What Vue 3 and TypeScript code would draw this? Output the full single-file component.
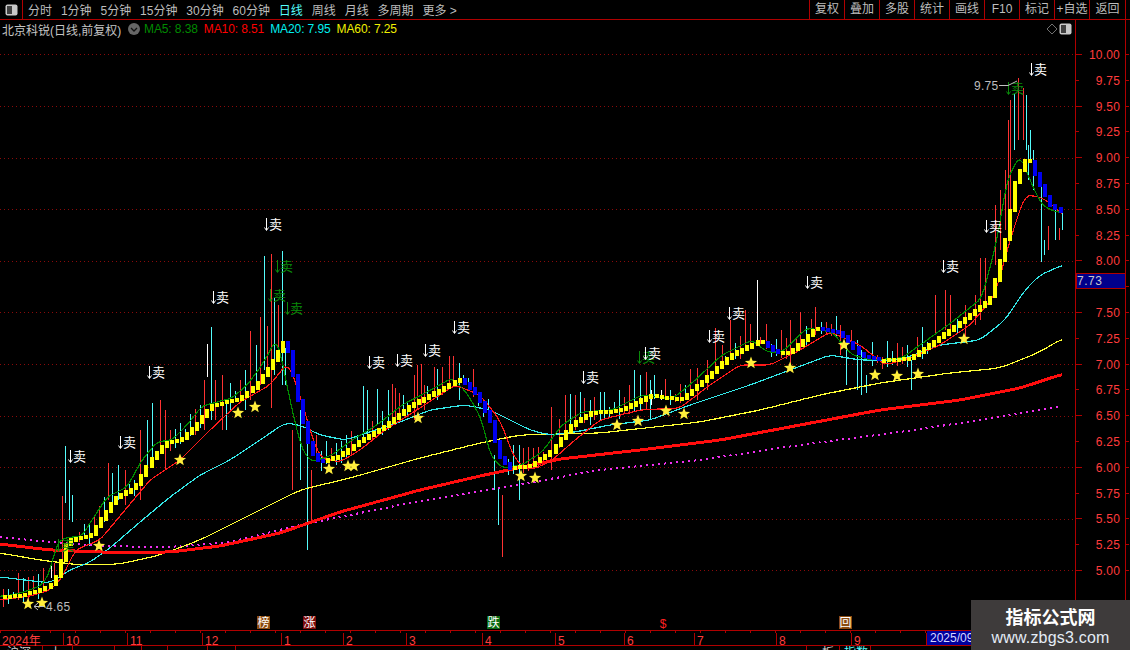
<script setup lang="ts">
type P = [number, number]

const leftTabs = ['分时', '1分钟', '5分钟', '15分钟', '30分钟', '60分钟', '日线', '周线', '月线', '多周期', '更多 >']
const rightTabs = ['复权', '叠加', '多股', '统计', '画线', 'F10', '标记', '+自选', '返回']
const months = [
  { t: '2024年', w: 64 }, { t: '10', w: 64 }, { t: '11', w: 75 }, { t: '12', w: 79 }, { t: '1', w: 62 },
  { t: '2', w: 63 }, { t: '3', w: 76 }, { t: '4', w: 73 }, { t: '5', w: 69 }, { t: '6', w: 70 },
  { t: '7', w: 82 }, { t: '8', w: 75 }, { t: '9', w: 75 }
]
const tabRow = [
  { t: '沪深', w: 43, c: '' }, { t: '上', w: 30, c: '' }, { t: '', w: 42, c: '' }, { t: '', w: 27, c: '' }, { t: '', w: 26, c: '' },
  { t: '', w: 40, c: '' }, { t: '', w: 28, c: '' }, { t: '', w: 571, c: '' }, { t: '板', w: 33, c: 'wide' }, { t: '指数', w: 31, c: 'cy' }
]

const stairKeys: P[] = [[0,597],[20,595],[35,591],[50,585],[58,572],[64,545],[72,538],[90,536],[100,520],[115,497],[135,487],[150,460],[165,442],[180,440],[195,425],[210,406],[240,398],[255,385],[270,365],[285,338],[292,370],[300,410],[310,450],[320,462],[340,455],[360,440],[385,425],[410,405],[435,392],[460,378],[475,393],[490,420],[498,455],[510,468],[530,465],[550,452],[570,425],[590,412],[620,410],[650,395],[680,399],[700,383],[730,355],[760,340],[775,352],[790,352],[815,328],[840,332],[860,355],[880,360],[910,358],[935,340],[960,322],[990,298],[1005,240],[1015,180],[1028,155],[1040,185],[1050,205],[1063,212]]
const ma10Keys: P[] = [[0,600],[30,596],[50,590],[62,578],[75,550],[100,540],[125,510],[150,480],[180,460],[210,430],[240,402],[270,385],[288,362],[300,395],[310,430],[320,458],[340,462],[360,450],[385,430],[420,408],[455,385],[480,395],[500,420],[515,460],[530,470],[550,462],[575,440],[600,420],[640,410],[680,408],[710,385],[740,365],[770,365],[800,350],[830,332],[860,345],[885,365],[910,358],[940,345],[970,325],[995,295],[1010,240],[1025,195],[1040,197],[1050,203],[1063,215]]
const ma20Keys: P[] = [[0,577],[25,580],[50,583],[70,570],[90,562],[110,548],[140,522],[170,497],[200,475],[230,460],[260,440],[285,423],[300,425],[320,435],[345,440],[370,432],[400,422],[430,410],[465,405],[490,410],[510,420],[530,430],[550,435],[575,432],[610,425],[650,420],[690,405],[720,395],[750,385],[790,370],[830,355],[860,360],[900,360],[940,345],[980,340],[1005,320],[1025,290],[1040,275],[1063,265]]
const ma60Keys: P[] = [[0,553],[40,560],[80,565],[120,564],[160,555],[200,540],[250,515],[300,490],[350,478],[420,458],[480,443],[520,435],[600,433],[700,422],[760,410],[820,395],[880,383],[950,373],[1000,368],[1040,352],[1063,338]]
const redKeys: P[] = [[0,544],[50,550],[100,552],[170,552],[220,546],[280,533],[340,512],[420,490],[480,476],[560,459],[640,450],[720,440],[800,425],[880,410],[960,400],[1020,388],[1063,374]]
const dotKeys: P[] = [[0,537],[50,542],[100,546],[170,547],[230,542],[300,525],[400,505],[500,488],[600,470],[700,460],[800,445],[900,432],[1000,417],[1063,406]]

function at(keys: P[], x: number): number {
  if (x <= keys[0][0]) return keys[0][1]
  for (let i = 1; i < keys.length; i++) {
    if (x <= keys[i][0]) {
      const [a, b] = keys[i - 1]
      const [c, d] = keys[i]
      return b + ((d - b) * (x - a)) / (c - a)
    }
  }
  return keys[keys.length - 1][1]
}
function smooth(keys: P[], x: number, r: number): number {
  let s = 0
  let n = 0
  for (let d = -r; d <= r; d++) {
    s += at(keys, x + d)
    n++
  }
  return s / n
}
function line(keys: P[], r: number, shift = 0, end = 1063): string {
  const out: string[] = []
  for (let x = 0; x <= end; x += 3) out.push(`${x},${smooth(keys, x + shift, r).toFixed(1)}`)
  return out.join(' ')
}

const ma5Line = line(stairKeys, 4, 8)
const ma10Line = line(ma10Keys, 5)
const ma20Line = line(ma20Keys, 6)
const ma60Line = line(ma60Keys, 10)
const redLine = line(redKeys, 6)
const dotLine = line(dotKeys, 6)

const step = 5.05
const bars: { x: number; y: number; h: number; up: boolean }[] = []
for (let i = 1; i * step <= 1062; i++) {
  const x = i * step
  const a = smooth(stairKeys, x - step, 2)
  const b = smooth(stairKeys, x, 2)
  const up = b <= a + 0.8
  const top = Math.min(a, b) - 1
  bars.push({ x: Math.round(x) - 2, y: Math.round(top), h: Math.max(4, Math.round(Math.abs(b - a) + 3)), up })
}

type W = [number, number, number, string]
const R = '#ff3232'
const C = '#54fcfc'
const W_ = '#ffffff'
const spikes: W[] = [
  [51,563,578,W_],[54,563,580,R],[62,496,560,R],[65,446,503,C],[69,480,520,C],[72,495,522,C],[108,463,500,R],[112,473,510,C],[118,465,500,C],[125,470,505,R],
  [140,430,500,R],[147,420,470,C],[152,403,460,C],[160,400,450,R],[165,410,470,R],[204,380,430,R],[207,344,377,W_],[211,327,420,C],[215,380,420,R],[222,375,430,R],[226,400,430,C],
  [245,370,410,C],[250,331,400,R],[256,345,390,C],[260,317,385,R],[264,256,370,C],[267,326,375,R],[271,254,408,R],[274,298,375,C],[278,305,357,R],[282,251,385,C],[285,348,385,C],
  [292,430,490,R],[300,410,480,C],[307,430,550,C],[311,470,522,R],[363,386,440,C],[367,390,440,C],[377,389,425,C],[388,390,430,C],[392,384,425,R],[395,388,425,R],[399,393,420,R],[403,395,415,C],
  [414,375,420,R],[417,365,410,R],[421,364,405,R],[424,385,410,R],[434,367,395,R],[442,367,395,R],[449,356,385,R],[453,356,385,R],[459,363,400,C],[494,455,490,C],[498,488,525,C],[502,495,557,R],
  [519,445,500,C],[551,407,470,R],[565,395,430,R],[570,394,425,C],[575,395,430,R],[580,392,420,C],[590,400,425,C],[594,397,420,R],[600,392,420,C],[604,392,420,C],[634,370,412,C],[640,375,410,C],[646,372,410,R],[650,380,420,C],[651,390,405,W_],
  [661,390,400,W_],[697,368,400,R],[707,360,390,R],[715,328,370,R],[722,345,365,R],[730,320,360,R],[745,310,350,R],[757,280,340,W_],[790,320,370,R],[800,312,350,R],[815,307,335,R],[840,325,355,R],[846,340,385,C],[857,340,390,C],[861,350,395,C],[866,375,393,C],[911,360,390,C],
  [935,295,335,R],[945,290,330,R],[950,295,330,R],[965,305,340,R],[975,295,325,R],[980,258,320,R],[985,258,305,R],[995,205,265,R],[1000,190,250,R],[1005,170,230,R],[1008,120,220,R],[1010,100,230,R],[1014,94,150,C],[1018,78,140,R],[1023,88,140,R],[1026,95,150,C],[1028,145,180,C],[1030,130,160,C],[1033,150,190,C],
  [1041,180,262,C],[1044,240,255,C],[1048,226,250,R],[1055,210,240,C],[1059,228,240,R],[1062,210,230,C]
]
let seed = 41
function rnd(): number {
  seed = (seed * 1664525 + 1013904223) % 4294967296
  return seed / 4294967296
}
const wicks: { x: number; y1: number; y2: number; c: string }[] = spikes.map(s => ({ x: s[0], y1: s[1], y2: s[2], c: s[3] }))
for (let x = 3; x < 1050; x += step) {
  if (spikes.some(s => Math.abs(s[0] - x) < 3)) {
    rnd(); rnd(); rnd()
    continue
  }
  const y = at(stairKeys, x)
  const up = 3 + rnd() * 20
  const down = 2 + rnd() * 8
  wicks.push({ x: Math.round(x), y1: Math.round(y - up), y2: Math.round(y + down), c: rnd() > 0.5 ? R : C })
}

const stars: P[] = [[28,604],[42,603],[99,546],[180,460],[238,413],[255,407],[329,469],[348,466],[354,466],[418,418],[521,476],[535,478],[617,425],[638,421],[666,411],[684,414],[751,363],[790,368],[844,345],[875,375],[897,376],[918,374],[964,339]]
function starPts(cx: number, cy: number): string {
  const pts: string[] = []
  for (let i = 0; i < 10; i++) {
    const r = i % 2 ? 2.7 : 6.4
    const a = -Math.PI / 2 + (i * Math.PI) / 5
    pts.push(`${(cx + r * Math.cos(a)).toFixed(1)},${(cy + r * Math.sin(a)).toFixed(1)}`)
  }
  return pts.join(' ')
}

const sells: P[] = [[69,456],[119,442],[148,372],[212,297],[265,224],[368,362],[396,360],[424,350],[453,327],[582,377],[644,353],[708,336],[728,313],[806,282],[942,266],[985,226],[1030,69]]
const greenSells: P[] = [[276,266],[269,295],[286,308],[638,357],[1007,88],[57,545]]

const grid = [54, 106, 158, 209, 261, 312, 364, 416, 467, 519, 570]
const labels: { t: string; y: number; major: boolean }[] = []
for (let i = 0; i <= 20; i++) {
  const v = 10 - i * 0.25
  labels.push({ t: v.toFixed(2), y: Math.round(54 + i * 25.8), major: i % 2 === 0 })
}
const shownLabels = labels.filter(l => l.t !== '7.75')
const marks = [
  { x: 257, c: '#8b4a10', t: '榜' },
  { x: 303, c: '#7c0a0a', t: '涨' },
  { x: 487, c: '#0a6a14', t: '跌' },
  { x: 839, c: '#8b4a10', t: '回' }
]
</script>

<template>
  <div class="app">
    <header class="toolbar">
      <div class="panel-btn">
        <svg width="13" height="12" viewBox="0 0 13 12">
          <rect x="0.5" y="0.5" width="12" height="11" rx="2" fill="#c8c8c8" />
          <rect x="2" y="2" width="5" height="8" fill="#404040" />
        </svg>
      </div>
      <nav class="tabs">
        <span v-for="t in leftTabs" :key="t" class="tab" :class="{ on: t === '日线' }">{{ t }}</span>
      </nav>
      <nav class="actions">
        <span v-for="t in rightTabs" :key="t" class="action">{{ t }}</span>
      </nav>
    </header>

    <div class="info">
      <div class="info-main">
        <span class="title">北京科锐(日线,前复权)</span>
        <svg class="chev" width="12" height="12" viewBox="0 0 12 12">
          <circle cx="6" cy="6" r="6" fill="#666" />
          <path d="M3 5 L6 8 L9 5" fill="none" stroke="#111" stroke-width="1.3" />
        </svg>
        <span class="ma g">MA5: 8.38</span>
        <span class="ma r">MA10: 8.51</span>
        <span class="ma c">MA20: 7.95</span>
        <span class="ma y">MA60: 7.25</span>
        <span class="spacer"></span>
        <svg class="diamond" width="12" height="12" viewBox="0 0 12 12">
          <path d="M6 1 L11 6 L6 11 L1 6 Z" fill="none" stroke="#707070" />
        </svg>
        <svg width="13" height="12" viewBox="0 0 13 12">
          <rect x="0.5" y="0.5" width="12" height="11" rx="2" fill="#c8c8c8" />
          <rect x="2" y="2" width="5" height="8" fill="#404040" />
        </svg>
      </div>
      <div class="info-axis"></div>
    </div>

    <main class="body">
      <svg class="chart" width="1075" height="592" viewBox="0 38 1075 592">
        <g shape-rendering="crispEdges">
          <line v-for="y in grid" :key="y" x1="0" x2="1075" :y1="y + 0.5" :y2="y + 0.5" class="grid" />
          <line v-for="(w, i) in wicks" :key="i" :x1="w.x + 0.5" :x2="w.x + 0.5" :y1="w.y1" :y2="w.y2" :stroke="w.c" />
          <polyline :points="dotLine" fill="none" stroke="#f030f0" stroke-width="2" stroke-dasharray="2 4" />
          <polyline :points="ma60Line" fill="none" stroke="#ffff33" stroke-width="1.2" />
          <polyline :points="ma20Line" fill="none" stroke="#33e8e8" stroke-width="1.2" />
          <polyline :points="redLine" fill="none" stroke="#ff0d0d" stroke-width="3" />
          <polyline :points="ma10Line" fill="none" stroke="#ff1a1a" stroke-width="1.2" />
          <polyline :points="ma5Line" fill="none" stroke="#008a00" stroke-width="1.2" />
          <rect v-for="(b, i) in bars" :key="i" :x="b.x" :y="b.y" width="4" :height="b.h" :fill="b.up ? '#ffff00' : '#0000f0'" />
        </g>
        <polygon v-for="(s, i) in stars" :key="i" :points="starPts(s[0], s[1])" fill="#ffee3c" />

        <g v-for="(s, i) in greenSells" :key="'g' + i" class="sell green" :transform="`translate(${s[0]} ${s[1]})`">
          <path d="M1.5 -6 V6 M-0.5 3.5 L1.5 6.5 L3.5 3.5" fill="none" stroke="#0a8a0a" />
          <text x="4" y="5" fill="#0a8a0a">卖</text>
        </g>
        <g v-for="(s, i) in sells" :key="'s' + i" class="sell" :transform="`translate(${s[0]} ${s[1]})`">
          <path d="M1.5 -6 V6 M-0.5 3.5 L1.5 6.5 L3.5 3.5" fill="none" stroke="#fff" />
          <text x="4" y="5" fill="#fff">卖</text>
        </g>

        <text x="974" y="90" class="note">9.75</text>
        <path d="M999 85.5 H1008 L1017 81" fill="none" stroke="#c0c0c0" />
        <text x="46" y="611" class="note">4.65</text>
        <path d="M44 606.5 H34 M38 603 L34 606.5 L38 610" fill="none" stroke="#c0c0c0" />

        <g v-for="m in marks" :key="m.t">
          <rect :x="m.x" y="616" width="13" height="13" :fill="m.c" />
          <text :x="m.x + 6.5" y="627" class="mark">{{ m.t }}</text>
        </g>
        <text x="663" y="628" class="dollar">$</text>
      </svg>

      <svg class="axis" width="55" height="592" viewBox="1075 38 55 592">
        <g shape-rendering="crispEdges">
          <line x1="1075.5" x2="1075.5" y1="38" y2="630" class="tick" />
          <line v-for="l in labels" :key="l.t" x1="1076" :x2="l.major ? 1082 : 1079" :y1="l.y + 0.5" :y2="l.y + 0.5" class="tick" />
          <line x1="1125.5" x2="1125.5" y1="38" y2="630" class="tick" />
          <line v-for="l in labels" :key="'r' + l.t" x1="1126" x2="1129" :y1="l.y + 0.5" :y2="l.y + 0.5" class="tick" />
        </g>
        <text v-for="l in shownLabels" :key="'t' + l.t" x="1120" :y="l.y + 5" class="price">{{ l.t }}</text>
        <rect x="1076.5" y="273.5" width="49" height="15" fill="#00008b" stroke="#b00000" />
        <text x="1077" y="285" class="now">7.73</text>
      </svg>
    </main>

    <footer class="dates">
      <span v-for="m in months" :key="m.t" class="date" :style="{ width: m.w + 'px' }">{{ m.t }}</span>
      <span class="stamp">2025/09/</span>
    </footer>
    <div class="strip">
      <span v-for="(c, i) in tabRow" :key="i" class="strip-cell" :class="c.c" :style="{ width: c.w + 'px' }">{{ c.t }}</span>
    </div>

    <aside class="mark-site">
      <strong>指标公式网</strong>
      <span>www.zbgs3.com</span>
    </aside>
  </div>
</template>

<style>
html, body { margin: 0; background: #000; }
</style>

<style scoped>
.app {
  position: relative;
  width: 1130px;
  height: 650px;
  overflow: hidden;
  background: #000;
  display: flex;
  flex-direction: column;
  font-family: "Liberation Sans", "Noto Sans CJK SC", sans-serif;
  font-size: 12px;
  color: #bdbdbd;
}
.toolbar {
  height: 19px;
  flex: none;
  display: flex;
  align-items: stretch;
  border-bottom: 1px solid #b00000;
}
.panel-btn {
  width: 23px;
  box-sizing: border-box;
  border-right: 1px solid #b00000;
  display: flex;
  align-items: center;
  justify-content: center;
  padding-top: 1px;
}
.tabs {
  display: flex;
  align-items: center;
  gap: 8.9px;
  padding-left: 5px;
}
.tab { white-space: pre; }
.tab.on { color: #54fcfc; }
.actions {
  margin-left: auto;
  margin-right: 4px;
  display: flex;
}
.action {
  width: 35px;
  box-sizing: border-box;
  border-left: 1px solid #b00000;
  text-align: center;
  line-height: 18px;
  white-space: nowrap;
}
.action:last-child { width: 37px; border-right: 1px solid #b00000; }
.info {
  height: 18px;
  flex: none;
  display: flex;
}
.info-main {
  width: 1075px;
  display: flex;
  align-items: center;
  padding: 0 3px 0 2px;
  box-sizing: border-box;
}
.title { width: 126px; white-space: nowrap; color: #c4c4c4; }
.chev { margin-right: 4px; }
.ma { letter-spacing: -0.1px; margin-right: 6px; white-space: nowrap; }
.g { color: #008a00; }
.r { color: #ff0000; }
.c { color: #00f0f0; }
.y { color: #f0f000; }
.spacer { flex: 1; }
.diamond { margin-right: 1px; }
.info-axis {
  width: 51px;
  box-sizing: border-box;
  border-left: 1px solid #b00000;
  border-right: 1px solid #b00000;
}
.body {
  height: 592px;
  flex: none;
  display: flex;
}
.chart, .axis { display: block; flex: none; }
.grid { stroke: #8a0a0a; stroke-dasharray: 1 3; }
.tick { stroke: #b00000; }
.sell text {
  font-family: "Noto Sans CJK SC", sans-serif;
  font-size: 13px;
}
.note { fill: #bdbdbd; font-size: 12px; letter-spacing: 0.3px; }
.mark {
  fill: #fff;
  font-size: 12px;
  text-anchor: middle;
  font-family: "Noto Sans CJK SC", sans-serif;
}
.dollar { fill: #ff2020; font-size: 12px; text-anchor: middle; }
.price { fill: #ff3c3c; font-size: 12px; text-anchor: end; letter-spacing: 0.2px; }
.now { fill: #c8c8c8; font-size: 12px; letter-spacing: 0.5px; }
.dates {
  height: 16px;
  flex: none;
  box-sizing: border-box;
  display: flex;
  border-top: 1px solid #b00000;
  border-bottom: 1px solid #b00000;
  background-image: repeating-linear-gradient(90deg, #b00000 0 1px, transparent 1px 25px);
  background-size: 100% 2px;
  background-repeat: no-repeat;
}
.date {
  flex: none;
  box-sizing: border-box;
  padding: 1px 0 0 2px;
  line-height: 14px;
  border-right: 1px solid #b00000;
  color: #ff3c3c;
  background: #000;
  margin-top: 2px;
  height: 12px;
  overflow: visible;
}
.stamp {
  flex: none;
  width: 60px;
  background: #00009c;
  color: #d8d8ff;
  line-height: 14px;
  padding-left: 3px;
}
.strip {
  height: 4px;
  flex: none;
  overflow: hidden;
  display: flex;
}
.strip-cell {
  flex: none;
  box-sizing: border-box;
  border-right: 1px solid #b00000;
  line-height: 14px;
  padding-left: 7px;
  color: #d0d0d0;
}
.strip-cell.wide { padding-left: 15px; }
.strip-cell.cy { color: #54fcfc; padding-left: 4px; }
.mark-site {
  position: absolute;
  right: 0;
  bottom: 0;
  width: 159px;
  height: 50px;
  background: #3e3b3b;
  display: flex;
  flex-direction: column;
  align-items: center;
  box-sizing: border-box;
  padding-top: 4px;
}
.mark-site strong {
  font-family: "Noto Sans CJK SC", sans-serif;
  font-size: 18px;
  line-height: 24px;
  color: #fff;
}
.mark-site span {
  font-size: 16px;
  line-height: 19px;
  color: #e4ecf6;
  letter-spacing: 0.2px;
}
</style>
